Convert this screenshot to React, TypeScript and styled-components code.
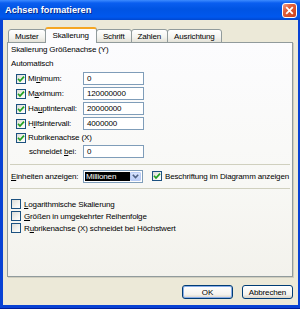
import React from 'react';
import styled, { createGlobalStyle } from 'styled-components';

const Global = createGlobalStyle`
  html, body {
    margin: 0;
    padding: 0;
    width: 300px;
    height: 309px;
    overflow: hidden;
    background: #0842D4;
  }
  #root {
    width: 300px;
    height: 309px;
  }
  * {
    box-sizing: border-box;
  }
`;

const FONT = `'Liberation Sans', Arial, sans-serif`;

const CheckMark = () => (
  <svg width="8" height="8" viewBox="0 0 8 8">
    <path d="M1 3.8 L3 6 L7 1.6" fill="none" stroke="#21A121" strokeWidth="1.7" />
  </svg>
);

const Check: React.FC<{ checked?: boolean }> = ({ checked }) => (
  <CheckBox>{checked && <CheckMark />}</CheckBox>
);

const App: React.FC = () => {
  return (
    <Window>
      <Global />
      <TitleBar>
        <Title>Achsen formatieren</Title>
        <CloseButton>
          <svg width="9" height="9" viewBox="0 0 9 9">
            <path d="M1.2 1.2 L7.8 7.8 M7.8 1.2 L1.2 7.8" stroke="#fff" strokeWidth="1.8" />
          </svg>
        </CloseButton>
      </TitleBar>
      <Frame>
        <Body>
          <TabRow>
            <Tab>Muster</Tab>
            <Tab active>Skalierung</Tab>
            <Tab>Schrift</Tab>
            <Tab>Zahlen</Tab>
            <Tab>Ausrichtung</Tab>
          </TabRow>
          <Panel>
            <Heading>Skalierung Größenachse (Y)</Heading>
            <Heading top={3}>Automatisch</Heading>
            <FieldList>
              <FieldRow>
                <Check checked />
                <FieldLabel>Mi<U>n</U>imum:</FieldLabel>
                <TextInput>0</TextInput>
              </FieldRow>
              <FieldRow>
                <Check checked />
                <FieldLabel>M<U>a</U>ximum:</FieldLabel>
                <TextInput>120000000</TextInput>
              </FieldRow>
              <FieldRow>
                <Check checked />
                <FieldLabel>Ha<U>u</U>ptintervall:</FieldLabel>
                <TextInput>20000000</TextInput>
              </FieldRow>
              <FieldRow>
                <Check checked />
                <FieldLabel>H<U>i</U>lfsintervall:</FieldLabel>
                <TextInput>4000000</TextInput>
              </FieldRow>
              <FieldRow short>
                <Check checked />
                <FieldLabel>Rubrikenachse (X)</FieldLabel>
              </FieldRow>
              <FieldRow indent>
                <FieldLabel narrow>schneidet <U>b</U>ei:</FieldLabel>
                <TextInput>0</TextInput>
              </FieldRow>
            </FieldList>
            <Separator />
            <UnitsRow>
              <UnitsLabel><U>E</U>inheiten anzeigen:</UnitsLabel>
              <Select>
                <SelectValue>Millionen</SelectValue>
                <SelectArrow>
                  <svg width="7" height="5" viewBox="0 0 7 5">
                    <path d="M0.8 0.8 L3.5 3.6 L6.2 0.8" fill="none" stroke="#4D6185" strokeWidth="1.6" />
                  </svg>
                </SelectArrow>
              </Select>
              <InlineCheck>
                <Check checked />
                <span>Beschriftung im Diagramm anzeigen</span>
              </InlineCheck>
            </UnitsRow>
            <Separator />
            <OptionList>
              <OptionRow>
                <Check />
                <span><U>L</U>ogarithmische Skalierung</span>
              </OptionRow>
              <OptionRow>
                <Check />
                <span><U>G</U>rößen in umgekehrter Reihenfolge</span>
              </OptionRow>
              <OptionRow>
                <Check />
                <span>R<U>u</U>brikenachse (X) schneidet bei Höchstwert</span>
              </OptionRow>
            </OptionList>
          </Panel>
          <ButtonRow>
            <Button primary>OK</Button>
            <Button>Abbrechen</Button>
          </ButtonRow>
        </Body>
      </Frame>
    </Window>
  );
};

export default App;

const Window = styled.div`
  width: 300px;
  height: 309px;
  display: flex;
  flex-direction: column;
  font-family: ${FONT};
  font-size: 8px;
  letter-spacing: -0.15px;
  color: #000;
`;

const TitleBar = styled.div`
  height: 20px;
  flex-shrink: 0;
  display: flex;
  align-items: center;
  justify-content: space-between;
  padding: 0 3px 0 5px;
  background: linear-gradient(
    to bottom,
    #3D8BFF 0%,
    #0A5EF0 15%,
    #0054E3 45%,
    #0058EE 85%,
    #0047D0 100%
  );
`;

const Title = styled.div`
  color: #fff;
  font-weight: bold;
  font-size: 9.2px;
  letter-spacing: 0;
  text-shadow: 1px 1px 0 #0A2A8A;
`;

const CloseButton = styled.div`
  width: 15px;
  height: 15px;
  margin-top: 1px;
  border: 1px solid #fff;
  border-radius: 3px;
  display: flex;
  align-items: center;
  justify-content: center;
  background: linear-gradient(135deg, #F0A08A 0%, #E2603C 35%, #C8411C 100%);
`;

const Frame = styled.div`
  flex: 1;
  display: flex;
  padding: 0 4px 3px 3px;
  background: #0842D4;
  border-bottom: 1px solid #001D9A;
`;

const Body = styled.div`
  flex: 1;
  display: flex;
  flex-direction: column;
  padding: 7px 5px 6px 4px;
  background: #ECE9D8;
`;

const TabRow = styled.div`
  height: 16px;
  display: flex;
  align-items: flex-end;
  padding-left: 2px;
  margin-bottom: -1px;
  position: relative;
  z-index: 1;
`;

const Tab = styled.div<{ active?: boolean }>`
  height: ${({ active }) => (active ? '16px' : '14px')};
  padding: 0 ${({ active }) => (active ? '7px' : '6px')};
  display: flex;
  align-items: center;
  justify-content: center;
  border: 1px solid #919B9C;
  border-bottom: ${({ active }) => (active ? 'none' : '1px solid #919B9C')};
  border-top: ${({ active }) => (active ? '2px solid #F5A623' : '1px solid #919B9C')};
  border-radius: 3px 3px 0 0;
  background: ${({ active }) =>
    active
      ? '#FCFCFE'
      : 'linear-gradient(to bottom, #FFFFFF 0%, #F3F3EF 60%, #E4E2D8 100%)'};
  padding-bottom: ${({ active }) => (active ? '2px' : '0')};
  margin-left: -1px;
`;

const Panel = styled.div`
  flex: 1;
  display: flex;
  flex-direction: column;
  padding: 1px 3px 0 3px;
  border: 1px solid #919B9C;
  background: linear-gradient(to bottom, #FCFCFE 0%, #F8F8F5 60%, #F3F2EC 100%);
  box-shadow: 1px 1px 0 #D0CEBF;
`;

const Heading = styled.div<{ top?: number }>`
  height: 11px;
  line-height: 11px;
  margin-top: ${({ top }) => top ?? 0}px;
`;

const U = styled.span`
  text-decoration: underline;
`;

const FieldList = styled.div`
  display: flex;
  flex-direction: column;
  margin-top: 2px;
  padding-left: 5px;
`;

const FieldRow = styled.div<{ short?: boolean; indent?: boolean }>`
  height: ${({ short }) => (short ? '13px' : '15px')};
  display: flex;
  align-items: center;
  padding-left: ${({ indent }) => (indent ? '13px' : '0')};
`;

const CheckBox = styled.span`
  width: 10px;
  height: 10px;
  flex-shrink: 0;
  display: flex;
  align-items: center;
  justify-content: center;
  border: 1px solid #1C5180;
  background: linear-gradient(135deg, #DCDCD7 0%, #F4F4F0 60%, #FFFFFF 100%);
`;

const FieldLabel = styled.span<{ narrow?: boolean }>`
  width: ${({ narrow }) => (narrow ? '54px' : '55px')};
  margin-left: ${({ narrow }) => (narrow ? '0' : '2px')};
  white-space: nowrap;
`;

const TextInput = styled.div`
  width: 61px;
  height: 13px;
  border: 1px solid #7F9DB9;
  background: #fff;
  padding-left: 3px;
  line-height: 11px;
`;

const Separator = styled.div`
  height: 1px;
  margin: 5px -1px 0 -1px;
  background: #D0D0BF;
`;

const UnitsRow = styled.div`
  height: 14px;
  margin-top: 4px;
  display: flex;
  align-items: center;
`;

const UnitsLabel = styled.span`
  width: 72px;
  white-space: nowrap;
`;

const Select = styled.div`
  width: 60px;
  height: 13px;
  display: flex;
  padding: 1px;
  border: 1px solid #7F9DB9;
  background: #fff;
`;

const SelectValue = styled.div`
  flex: 1;
  background: #000;
  color: #fff;
  line-height: 9px;
  padding-left: 1px;
  overflow: hidden;
`;

const SelectArrow = styled.div`
  width: 11px;
  display: flex;
  align-items: center;
  justify-content: center;
  border-radius: 1px;
  border: 1px solid #B9CCF5;
  background: linear-gradient(to bottom, #D6E2FC 0%, #BCCEF8 100%);
`;

const InlineCheck = styled.div`
  display: flex;
  align-items: center;
  gap: 3px;
  margin-left: 9px;
  white-space: nowrap;
`;

const OptionList = styled.div`
  display: flex;
  flex-direction: column;
  margin-top: 9px;
`;

const OptionRow = styled.div`
  height: 12px;
  display: flex;
  align-items: center;
  gap: 3px;
  white-space: nowrap;
`;

const ButtonRow = styled.div`
  display: flex;
  justify-content: flex-end;
  gap: 9px;
  margin-top: 8px;
`;

const Button = styled.div<{ primary?: boolean }>`
  width: 51px;
  height: 14px;
  display: flex;
  align-items: center;
  justify-content: center;
  border: 1px solid #003C74;
  border-radius: 3px;
  background: linear-gradient(to bottom, #FFFFFF 0%, #F4F3EE 70%, #D8D2C6 100%);
  box-shadow: ${({ primary }) => (primary ? 'inset 0 0 0 1px #8AAEE8' : 'none')};
`;
